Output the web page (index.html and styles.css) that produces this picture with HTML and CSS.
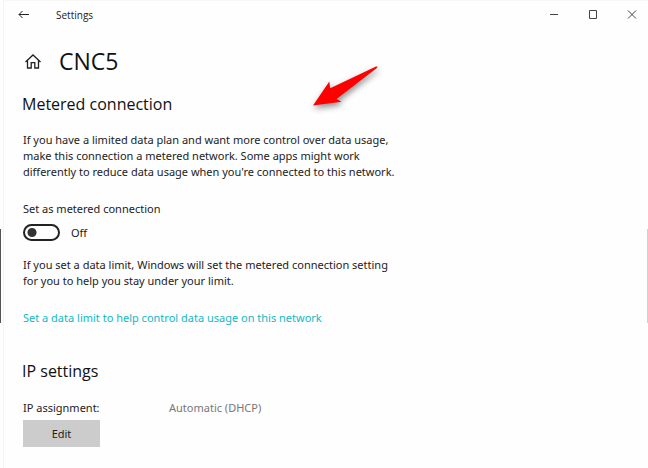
FILE: index.html
```
<!DOCTYPE html>
<html lang="en">
<head>
    <meta charset="UTF-8">
    <meta name="viewport" content="width=device-width, initial-scale=1.0">
    <title>Settings</title>
    <link rel="stylesheet" href="styles.css">
</head>
<body>

    <div class="window">
        <header class="titlebar">
            <button type="button" class="back" aria-label="Back">
                <svg width="12" height="10" viewBox="0 0 12 10"><path d="M11 4.500H1M4.500 1L1 4.500l3.500 3.500"/></svg>
            </button>
            <span class="app-name">Settings</span>
            <div class="controls">
                <button type="button" aria-label="Minimize">
                    <svg width="10" height="10" viewBox="0 0 10 10"><path d="M1 4.500h8"/></svg>
                </button>
                <button type="button" aria-label="Maximize">
                    <svg width="10" height="10" viewBox="0 0 10 10"><path d="M1.500 .5h7v8h-7z"/></svg>
                </button>
                <button type="button" aria-label="Close">
                    <svg width="10" height="10" viewBox="0 0 10 10"><path d="M1 .5l8 8M9 .5l-8 8"/></svg>
                </button>
            </div>
        </header>

        <main class="content">
            <div class="page-title">
                <svg class="home" width="19" height="16" viewBox="0 0 19 16"><path d="M2.500 9L10 2l7.500 7M4.500 7.500V15h3.700V9.700h3.600V15h3.700V7.500"/></svg>
                <h1>CNC5</h1>
            </div>

            <section class="metered">
                <h2>Metered connection</h2>
                <p>If you have a limited data plan and want more control over data usage,<br>
                make this connection a metered network. Some apps might work<br>
                differently to reduce data usage when you're connected to this network.</p>

                <label class="toggle-label" for="metered">Set as metered connection</label>
                <div class="toggle-row">
                    <input type="checkbox" class="toggle" id="metered">
                    <span>Off</span>
                </div>

                <p>If you set a data limit, Windows will set the metered connection setting<br>
                for you to help you stay under your limit.</p>

                <a class="link" href="#">Set a data limit to help control data usage on this network</a>
            </section>

            <section class="ip">
                <h2>IP settings</h2>
                <dl class="ip-row">
                    <dt>IP assignment:</dt>
                    <dd>Automatic (DHCP)</dd>
                </dl>
                <button type="button" class="edit">Edit</button>
            </section>
        </main>

        <!-- red pointer over the page -->
        <svg class="arrow" width="84" height="60" viewBox="0 0 84 60"><path d="M7 47.500L23.300 23.500l.9 6.800L70 8.500q2-.4 1.200 1.200L30.500 41l5 2.700z"/></svg>
        <div class="edge edge-left"></div>
        <div class="edge edge-right"></div>
    </div>

</body>
</html>
```

FILE: styles.css
```
* {
    box-sizing: border-box;
}

body {
    margin: 0;
    background: #fefefe;
    font-family: "Noto Sans", "Open Sans", sans-serif;
    font-size: 11px;
    line-height: 16px;
    color: #222;
}

h1, h2, p, dl, dd {
    margin: 0;
}

button {
    border: none;
    padding: 0;
    background: none;
    font: inherit;
    color: inherit;
}

svg {
    display: block;
    fill: none;
    stroke: #222;
}

.window {
    position: relative;
    min-height: 100vh;
    margin-left: 3px;
    border-left: 1px solid #f4f4f4;
    border-top: 1px solid #f8f8f8;
}

.titlebar {
    display: flex;
    align-items: center;
    height: 27px;
    padding-left: 14px;
}

.app-name {
    margin-left: 26px;
    font-family: "Open Sans", sans-serif;
    font-size: 10px;
}

.controls {
    display: flex;
    margin-left: auto;
    margin-right: -3px;
}

.controls button {
    display: flex;
    justify-content: center;
    width: 39px;
}

.controls svg {
    stroke: #444;
}

.content {
    padding: 16px 19px;
}

.page-title {
    display: flex;
    align-items: center;
    gap: 17px;
    height: 34px;
}

.home {
    stroke-width: 1.3;
}

h1 {
    font-family: "Open Sans", sans-serif;
    font-size: 23px;
    font-weight: 400;
    color: #111;
}

h2 {
    margin-left: -1px;
    font-family: "Open Sans", sans-serif;
    font-size: 16px;
    font-weight: 400;
    line-height: 24px;
    color: #111;
}

.metered h2 {
    margin-top: 14px;
    margin-bottom: 16px;
}

.toggle-label {
    display: block;
    margin-top: 21px;
}

.toggle-row {
    display: flex;
    align-items: center;
    gap: 11px;
    margin: 7px 0 16px;
}

/* switch */
.toggle {
    appearance: none;
    width: 37px;
    height: 17px;
    margin: 0;
    border: 2px solid #222;
    border-radius: 9px;
    background: radial-gradient(circle at 7px 50%, #333 4px, transparent 5px);
}

.link {
    display: block;
    margin-top: 21px;
    color: #12b8c4;
    text-decoration: none;
}

.ip h2 {
    margin-top: 33px;
    margin-bottom: 17px;
}

.ip-row {
    display: grid;
    grid-template-columns: 146px 1fr;
}

.ip-row dd {
    color: #777;
}

.edit {
    width: 77px;
    height: 27px;
    margin-top: 4px;
    background: #ccc;
}

.arrow {
    position: absolute;
    left: 302px;
    top: 57px;
    fill: #f00;
    stroke: none;
    filter: drop-shadow(1px 3px 3px rgba(0, 0, 0, 0.45));
}

.edge {
    position: absolute;
    top: 228px;
    width: 2px;
    height: 94px;
}

.edge-left {
    left: -5px;
    background: #555;
}

.edge-right {
    right: 0;
    width: 1px;
    background: #d0d0d0;
}
```
